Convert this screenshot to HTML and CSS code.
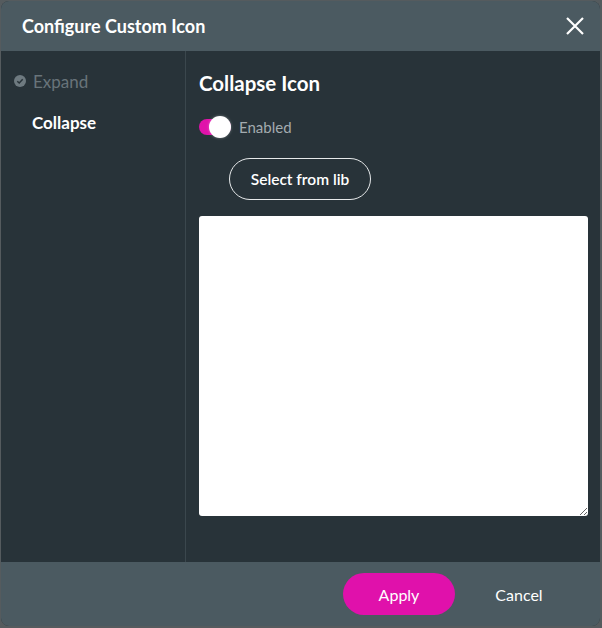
FILE: index.html
```html
<!DOCTYPE html>
<html>
<head>
<meta charset="utf-8">
<link rel="stylesheet" href="styles.css">
</head>
<body>
<div class="dialog">
  <div class="header">
    <div class="title">Configure Custom Icon</div>
    <svg class="close" width="18" height="18" viewBox="0 0 18 18"><path d="M1 1L17 17M17 1L1 17" stroke="#fff" stroke-width="2.2" fill="none"/></svg>
  </div>
  <div class="content">
    <div class="sidebar">
      <div class="item done">
        <svg width="12" height="12" viewBox="0 0 12 12"><circle cx="6" cy="6" r="6" fill="#6e7a80"/><path d="M3.3 6.2L5.2 8L8.7 4.3" stroke="#283339" stroke-width="1.5" fill="none"/></svg>
        <span>Expand</span>
      </div>
      <div class="item active"><span>Collapse</span></div>
    </div>
    <div class="main">
      <h2>Collapse Icon</h2>
      <div class="toggle-row">
        <div class="toggle"><div class="knob"></div></div>
        <span class="toggle-label">Enabled</span>
      </div>
      <button class="outline-btn">Select from lib</button>
      <textarea class="editor"></textarea>
    </div>
  </div>
  <div class="footer">
    <button class="apply">Apply</button>
    <button class="cancel">Cancel</button>
  </div>
</div>
</body>
</html>
```
FILE: styles.css
```css
html, body { margin: 0; padding: 0; }
body {
  background: #555b5e;
  width: 602px;
  height: 628px;
  font-family: Lato, "Open Sans", sans-serif;
  overflow: hidden;
}
.dialog {
  margin: 1px 0 0 1px;
  width: 599px;
  height: 625px;
  border-radius: 8px;
  overflow: hidden;
  background: #283339;
  display: flex;
  flex-direction: column;
}
.header {
  height: 50px;
  flex: none;
  background: #4b5a61;
  display: flex;
  align-items: center;
  justify-content: space-between;
  padding: 0 16px 0 21px;
}
.title {
  color: #fff;
  font-size: 18px;
  font-weight: 700;
}
.content {
  flex: 1;
  display: flex;
  min-height: 0;
}
.sidebar {
  width: 184px;
  border-right: 1px solid #3b474d;
  padding-top: 19px;
  box-sizing: content-box;
}
.item {
  display: flex;
  align-items: center;
  height: 22px;
  margin-bottom: 19px;
  font-size: 17px;
}
.item.done { color: #68747a; padding-left: 13px; }
.item.done svg { margin-right: 7px; }
.item.active { color: #fff; font-weight: 700; padding-left: 31px; }
.main {
  flex: 1;
  padding: 20px 11px 0 13px;
  display: flex;
  flex-direction: column;
  align-items: flex-start;
}
h2 {
  margin: 0;
  color: #fff;
  font-size: 20.5px;
  font-weight: 700;
  line-height: 24px;
}
.toggle-row {
  display: flex;
  align-items: center;
  margin-top: 21px;
  height: 22px;
}
.toggle {
  width: 32px;
  height: 16px;
  border-radius: 8px;
  background: #e013aa;
  position: relative;
}
.knob {
  position: absolute;
  right: 0;
  top: -3px;
  width: 22px;
  height: 22px;
  border-radius: 50%;
  background: #fff;
  box-shadow: 0 0 3px rgba(255,255,255,0.35);
}
.toggle-label {
  color: #a3abaf;
  font-size: 15px;
  margin-left: 8px;
}
.outline-btn {
  margin: 20px 0 0 30px;
  width: 142px;
  height: 42px;
  border: 1px solid #e6e9ea;
  border-radius: 21px;
  background: transparent;
  color: #fff;
  font-family: Lato, sans-serif;
  font-size: 15.5px;
  font-weight: 600;
  padding: 0;
}
.editor {
  margin-top: 16px;
  width: 389px;
  height: 300px;
  border: none;
  border-radius: 3px;
  background: #fff;
  box-sizing: border-box;
  padding: 0;
}
.footer {
  height: 64px;
  flex: none;
  background: #4b5a61;
  display: flex;
  align-items: center;
  justify-content: flex-end;
  padding-right: 35px;
}
.apply {
  width: 112px;
  height: 42px;
  border: none;
  border-radius: 21px;
  background: #e011ab;
  color: #fff;
  font-family: Lato, sans-serif;
  font-size: 16px;
  margin-right: 18px;
}
.cancel {
  width: 92px;
  height: 42px;
  border: none;
  background: transparent;
  color: #fff;
  font-family: Lato, sans-serif;
  font-size: 16px;
  padding: 0;
}
```
